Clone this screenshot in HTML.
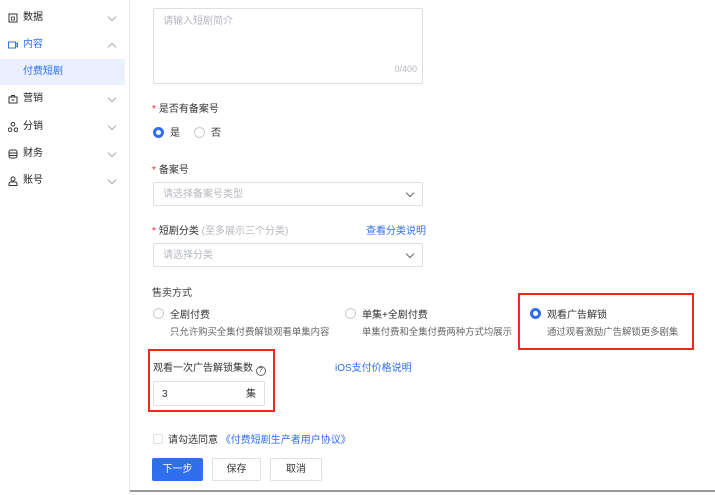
<!DOCTYPE html>
<html><head><meta charset="utf-8"><style>
*{box-sizing:border-box;margin:0;padding:0}
body{width:715px;height:495px;overflow:hidden;background:#fff;font-family:"Liberation Sans","Noto Sans CJK SC",sans-serif;font-size:10px;line-height:14px;color:#333;position:relative}
.a{position:absolute;white-space:nowrap;margin-top:3px}
.box .a{margin-top:1px}
.side{position:absolute;left:0;top:0;width:130px;height:495px;border-right:1px solid #e5e6eb}
.it{position:absolute;left:0;width:125px;height:26px;line-height:26px;font-size:10px;color:#222}
.it .ic{position:absolute;left:8px;top:8px;width:10px;height:10px}
.it .t{position:absolute;left:23px}
.it .ch{position:absolute;right:10px;top:9px;width:6px;height:6px;border-right:1px solid #aaa;border-bottom:1px solid #aaa;transform:rotate(45deg)}
.box{position:absolute;border:1px solid #dcdfe6;border-radius:2px;background:#fff}
.ph{color:#b5b8bf}
.req{color:#f5222d;margin-right:3px}
.radio{position:absolute;width:11px;height:11px;border:1px solid #c9cdd4;border-radius:50%;background:#fff}
.radio.on{border:3.5px solid #2f6fed}
.sel::after{content:"";position:absolute;right:9px;top:7px;width:5px;height:5px;border-right:1px solid #666;border-bottom:1px solid #666;transform:rotate(45deg)}
.red{position:absolute;border:2px solid #f0281e}
.btn{position:absolute;top:458px;height:23px;line-height:21px;text-align:center;border:1px solid #dcdfe6;border-radius:2px;font-size:10px}
.blue{color:#2f6fed}
.d{font-size:9.4px;color:#666}
</style></head><body>
<div class="side">
 <div class="it" style="top:5px"><svg class="ic" viewBox="0 0 10 10"><rect x="1" y="1" width="8" height="8" fill="none" stroke="#333"/><rect x="3.5" y="4" width="3" height="3" fill="none" stroke="#333" stroke-width=".8"/></svg><span class="t">数据</span><i class="ch"></i></div>
 <div class="it" style="top:32px;color:#2f6fed"><svg class="ic" viewBox="0 0 10 10"><rect x="0.5" y="2" width="7" height="6" fill="none" stroke="#2f6fed"/><path d="M7.5 4.5L9.5 3v4L7.5 5.5" fill="none" stroke="#2f6fed"/></svg><span class="t">内容</span><i class="ch" style="transform:rotate(225deg);top:12px"></i></div>
 <div class="it" style="top:59px;background:#eaf0fd;color:#2f6fed"><span class="t">付费短剧</span></div>
 <div class="it" style="top:86px"><svg class="ic" viewBox="0 0 10 10"><rect x="1" y="3" width="8" height="6" fill="none" stroke="#333"/><path d="M3.5 3V1.5h3V3M3.5 6h3" fill="none" stroke="#333"/></svg><span class="t">营销</span><i class="ch"></i></div>
 <div class="it" style="top:114px"><svg class="ic" viewBox="0 0 10 10"><circle cx="5" cy="2.3" r="1.8" fill="none" stroke="#333"/><circle cx="2" cy="7.7" r="1.8" fill="none" stroke="#333"/><circle cx="8" cy="7.7" r="1.8" fill="none" stroke="#333"/></svg><span class="t">分销</span><i class="ch"></i></div>
 <div class="it" style="top:141px"><svg class="ic" viewBox="0 0 10 10"><rect x="1" y="1" width="8" height="8" rx="2" fill="none" stroke="#333"/><path d="M1 4h8M1 6.5h8" stroke="#333"/></svg><span class="t">财务</span><i class="ch"></i></div>
 <div class="it" style="top:168px"><svg class="ic" viewBox="0 0 10 10"><circle cx="5" cy="3" r="2" fill="none" stroke="#333"/><path d="M1 9.5V8c0-1.5 1-2 2-2h4c1 0 2 .5 2 2v1.5z" fill="none" stroke="#333"/></svg><span class="t">账号</span><i class="ch"></i></div>
</div>

<div class="box" style="left:153px;top:8px;width:270px;height:76px"><span class="a ph" style="left:9px;top:5px">请输入短剧简介</span><span class="a ph" style="right:5px;top:52px;font-size:9px">0/400</span></div>
<div class="a" style="left:152px;top:100px"><span class="req">*</span>是否有备案号</div>
<div class="radio on" style="left:153px;top:127px"></div><span class="a" style="left:170px;top:124px">是</span>
<div class="radio" style="left:194px;top:127px"></div><span class="a" style="left:211px;top:124px">否</span>
<div class="a" style="left:152px;top:161px"><span class="req">*</span>备案号</div>
<div class="box sel" style="left:153px;top:182px;width:270px;height:24px"><span class="a ph" style="left:9px;top:4px">请选择备案号类型</span></div>
<div class="a" style="left:152px;top:222px"><span class="req">*</span>短剧分类<span class="ph"> (至多展示三个分类)</span></div>
<span class="a blue" style="left:366px;top:222px">查看分类说明</span>
<div class="box sel" style="left:153px;top:243px;width:270px;height:24px"><span class="a ph" style="left:9px;top:4px">请选择分类</span></div>
<div class="a" style="left:152px;top:284px;color:#444">售卖方式</div>
<div class="radio" style="left:153px;top:308px"></div><span class="a" style="left:170px;top:306px">全剧付费</span><span class="a d" style="left:170px;top:322px">只允许购买全集付费解锁观看单集内容</span>
<div class="radio" style="left:345px;top:308px"></div><span class="a" style="left:362px;top:306px">单集+全剧付费</span><span class="a d" style="left:362px;top:322px">单集付费和全集付费两种方式均展示</span>
<div class="radio on" style="left:530px;top:308px"></div><span class="a" style="left:547px;top:306px">观看广告解锁</span><span class="a d" style="left:547px;top:322px">通过观看激励广告解锁更多剧集</span>
<div class="red" style="left:518px;top:293px;width:176px;height:57px"></div>
<div class="a" style="left:153px;top:359px">观看一次广告解锁集数 <span style="display:inline-block;width:10px;height:10px;border:1px solid #666;border-radius:50%;font-size:7px;line-height:8px;text-align:center;vertical-align:-1px">?</span></div>
<span class="a blue" style="left:335px;top:359px">iOS支付价格说明</span>
<div class="box" style="left:153px;top:381px;width:112px;height:25px"><span class="a" style="left:8px;top:5px">3</span><span class="a" style="right:8px;top:5px">集</span></div>
<div class="red" style="left:148px;top:349px;width:127px;height:63px"></div>
<div class="box" style="left:153px;top:434px;width:10px;height:10px"></div>
<span class="a" style="left:168px;top:431px">请勾选同意 <span class="blue">《付费短剧生产者用户协议》</span></span>
<div class="btn" style="left:152px;width:51px;background:#2f6fed;border-color:#2f6fed;color:#fff">下一步</div>
<div class="btn" style="left:212px;width:49px">保存</div>
<div class="btn" style="left:270px;width:52px">取消</div>
<div style="position:absolute;left:130px;top:490px;width:585px;height:2px;background:#999"></div>
</body></html>
